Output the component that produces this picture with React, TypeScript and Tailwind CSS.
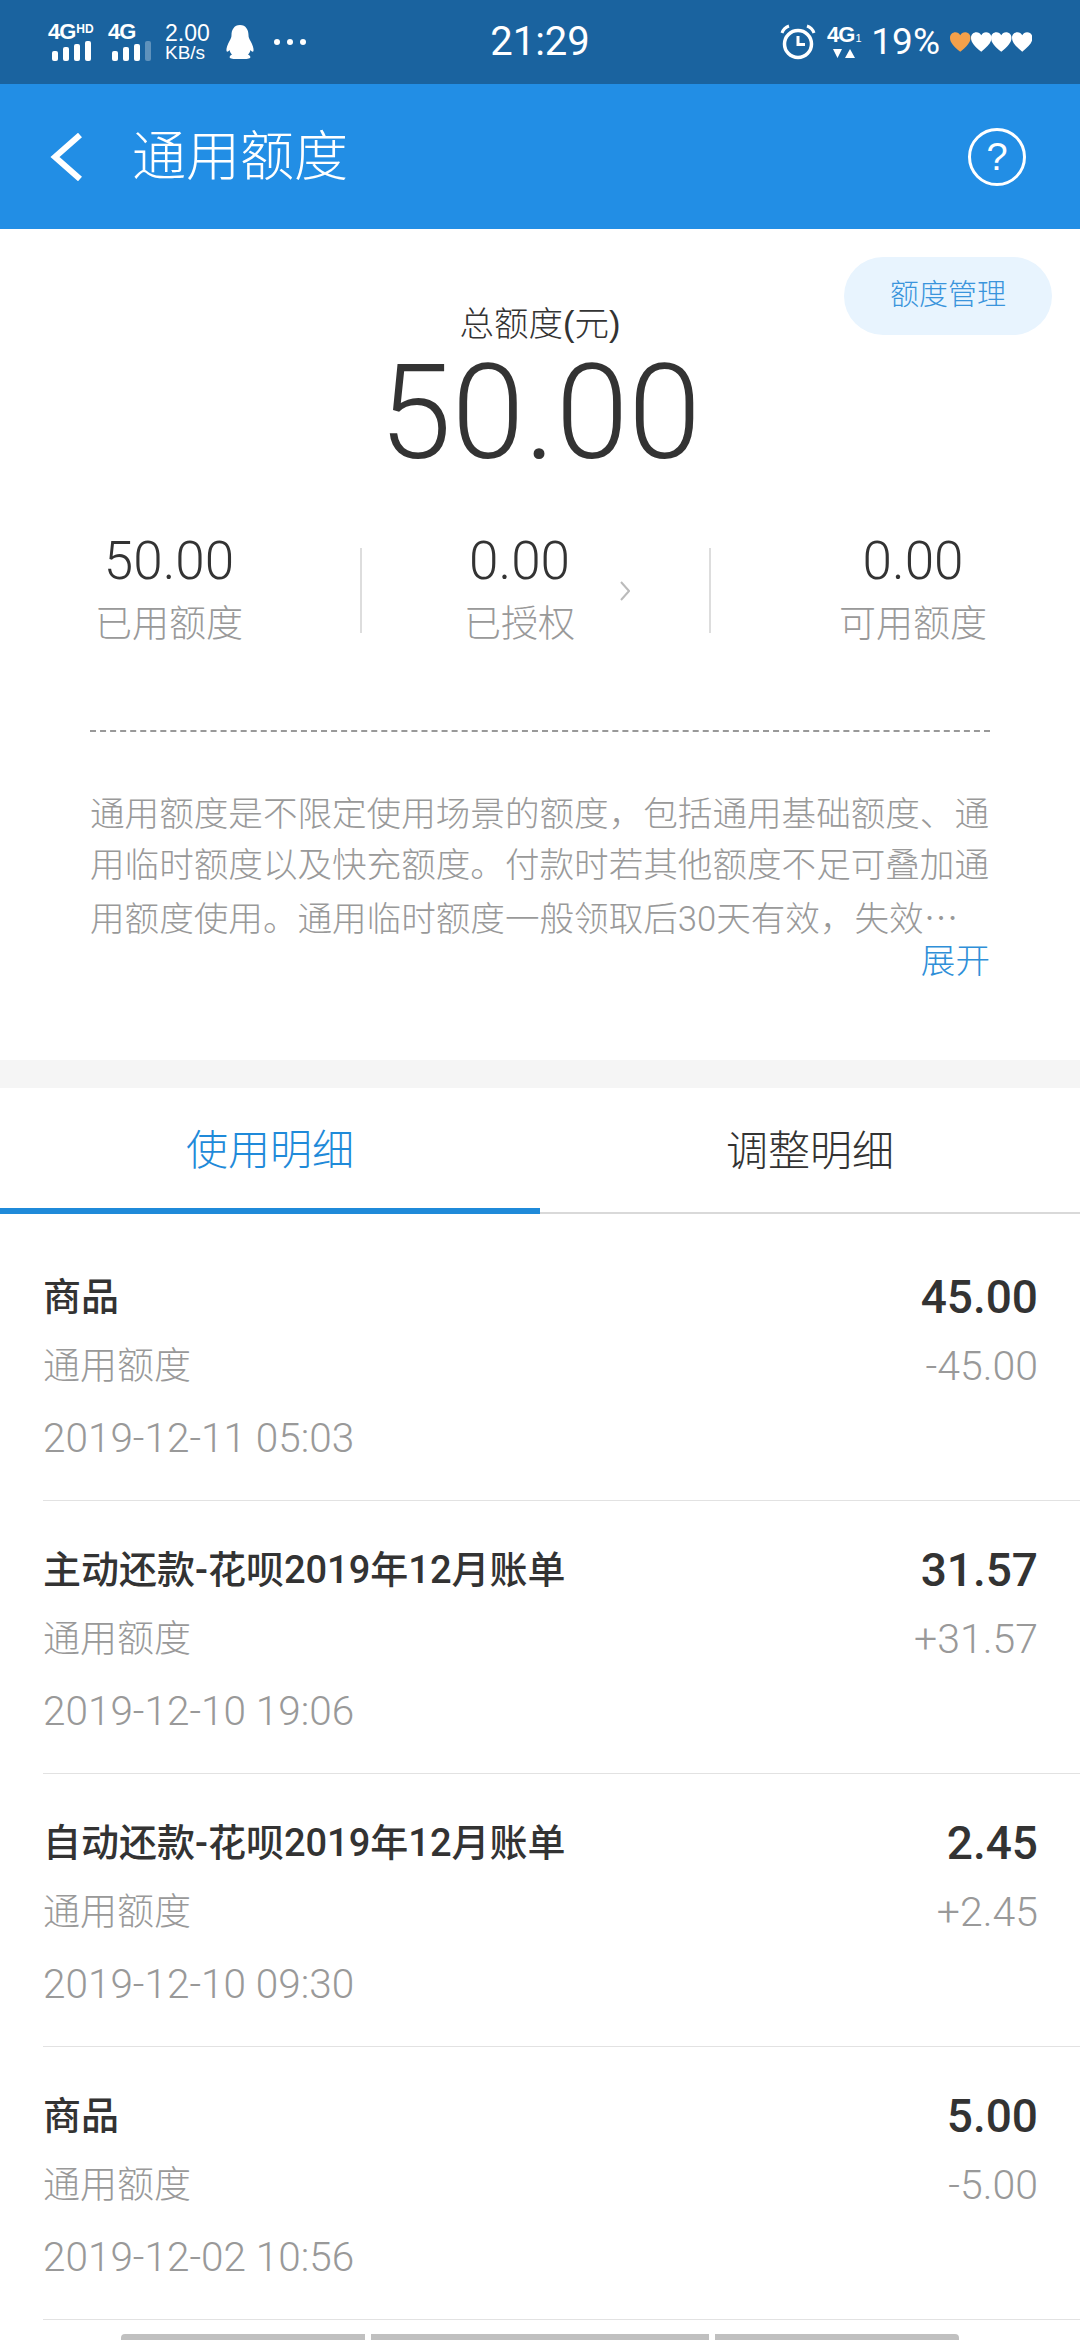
const rows = [
  { title: "商品", amount: "45.00", change: "-45.00", date: "2019-12-11 05:03" },
  { title: "主动还款-花呗2019年12月账单", amount: "31.57", change: "+31.57", date: "2019-12-10 19:06" },
  { title: "自动还款-花呗2019年12月账单", amount: "2.45", change: "+2.45", date: "2019-12-10 09:30" },
  { title: "商品", amount: "5.00", change: "-5.00", date: "2019-12-02 10:56" },
];

const font = "font-['Liberation_Sans','Noto_Sans_CJK_SC',sans-serif]";
const numFont = "font-['Roboto','Noto_Sans_CJK_SC',sans-serif]";

const SignalBars = ({ dim }: { dim?: boolean }) => (
  <div className="flex items-end gap-[5px] h-[20px] ml-[4px]">
    <div className="w-[6px] h-[10px] bg-white rounded-[2px]" />
    <div className="w-[6px] h-[14px] bg-white rounded-[2px]" />
    <div className="w-[6px] h-[17px] bg-white rounded-[2px]" />
    {dim ? (
      <div className="w-[6px] h-[20px] rounded-[2px] bg-white/30" />
    ) : (
      <div className="w-[6px] h-[20px] rounded-[2px] bg-white" />
    )}
  </div>
);

const StatusBar = () => (
  <div className="grid grid-cols-3 items-center h-[84px] bg-[#1a639f] text-white">
    <div className="flex items-center pl-[48px]">
      <div className="flex flex-col w-[51px]">
        <div className="flex items-start h-[18px] font-bold text-[22px] leading-[18px] tracking-[-1px]">
          4G<span className="ml-[1px] text-[12px] leading-[12px] tracking-normal">HD</span>
        </div>
        <SignalBars />
      </div>
      <div className="flex flex-col ml-[9px] w-[50px]">
        <div className="h-[18px] font-bold text-[22px] leading-[18px] tracking-[-1px]">4G</div>
        <SignalBars dim />
      </div>
      <div className="flex flex-col items-start ml-[7px] w-[48px]">
        <span className="text-[23px] leading-[21px]">2.00</span>
        <span className="text-[19px] leading-[17px]">KB/s</span>
      </div>
      <svg className="ml-[13px]" width="28" height="34" viewBox="0 0 28 34" fill="#fff">
        <path d="M14 0c6 0 8.500 5 8.500 10 0 2 .5 3.500 2 6 2 3.500 3.500 7.500 3 10-.5 1.500-2 .5-3-1-.5 2-1.500 3.500-2.500 4.500 2 1 3 2.500 2 3.500-1 1-5 1-10 1s-9 0-10-1c-1-1 0-2.500 2-3.500-1-1-2-2.500-2.500-4.500-1 1.500-2.500 2.500-3 1-.5-2.500 1-6.500 3-10 1.500-2.500 2-4 2-6C5.500 5 8 0 14 0z" />
      </svg>
      <div className="flex gap-[7px] ml-[20px]">
        <div className="w-[6px] h-[6px] rounded-full bg-white" />
        <div className="w-[6px] h-[6px] rounded-full bg-white" />
        <div className="w-[6px] h-[6px] rounded-full bg-white" />
      </div>
    </div>
    <div className={`text-center text-[40px] leading-[44px] ${numFont}`}>21:29</div>
    <div className="flex items-center justify-end pr-[48px]">
      <svg width="36" height="36" viewBox="0 0 36 36" fill="none" stroke="#fff">
        <circle cx="18" cy="20" r="13.500" strokeWidth="3.500" />
        <path d="M18 12v8.500h7" strokeWidth="3" />
        <path d="M2 9c1-3 4-6 7-7M34 9c-1-3-4-6-7-7" strokeWidth="3" />
      </svg>
      <div className="flex flex-col items-center ml-[10px] w-[35px]">
        <div className="font-bold text-[22px] leading-[20px] tracking-[-1px]">
          4G<span className="ml-[1px] text-[11px] font-normal">1</span>
        </div>
        <svg width="22" height="11" viewBox="0 0 22 11" fill="#fff">
          <path d="M0 1h9L4.500 10zM12 10h10L17 1z" />
        </svg>
      </div>
      <span className={`ml-[10px] text-[37px] leading-[40px] ${numFont}`}>19%</span>
      <div className="flex ml-[10px]">
        {["#f4a04a", "#fff", "#fff", "#fff"].map((c, i) => (
          <svg key={i} width="20.500" height="20" viewBox="0 0 20 19" fill={c}>
            <path d="M10 19C4 14 0 10 0 5.500 0 2 2.500 0 5.300 0 7.300 0 9 1 10 3c1-2 2.700-3 4.700-3C17.500 0 20 2 20 5.500 20 10 16 14 10 19z" />
          </svg>
        ))}
      </div>
    </div>
  </div>
);

const Header = () => (
  <div className="flex items-center h-[145px] bg-[#228ee5] text-white">
    <svg className="ml-[50px]" width="33" height="48" viewBox="0 0 33 48" fill="none" stroke="#fff" strokeWidth="6">
      <path d="M30 2 5 24l25 22" />
    </svg>
    <div className="ml-[49px] text-[54px] leading-[70px] font-light">通用额度</div>
    <div className="ml-auto mr-[54px] flex items-center justify-center w-[58px] h-[58px] rounded-full border-[3px] border-white text-[38px] leading-none">
      ?
    </div>
  </div>
);

const Stat = ({ value, label }: { value: string; label: string }) => (
  <div className="flex flex-col items-center">
    <div className={`text-[53px] leading-[60px] text-[#333] font-light ${numFont}`}>{value}</div>
    <div className="mt-[9px] text-[37px] leading-[50px] text-[#999] whitespace-nowrap font-light">{label}</div>
  </div>
);

const Summary = () => (
  <div className="bg-white">
    <div className="grid grid-cols-[1fr_auto_1fr] pt-[28px]">
      <div />
      <div className="mt-[45px] text-[34.500px] leading-[44px] text-[#333] font-light">总额度(元)</div>
      <div className="justify-self-end mr-[28px] flex items-center justify-center w-[208px] h-[78px] rounded-full bg-[#e8f4fe] text-[29px] text-[#3a94dc] font-light">
        额度管理
      </div>
    </div>
    <div className={`mt-[5px] text-center text-[131px] leading-[124px] text-[#333] font-light ${numFont}`}>50.00</div>

    <div className="flex items-start mt-[56px] pl-[95px]">
      <Stat value="50.00" label="已用额度" />
      <div className="w-[2px] h-[85px] mt-[17px] ml-[117px] bg-[#ddd]" />
      <div className="ml-[102px]">
        <Stat value="0.00" label="已授权" />
      </div>
      <svg className="ml-[45px] mt-[50px]" width="10" height="20" viewBox="0 0 10 20" fill="none" stroke="#bbb" strokeWidth="2">
        <path d="m1 1 8 9-8 9" />
      </svg>
      <div className="w-[2px] h-[85px] mt-[17px] ml-[79px] bg-[#ddd]" />
      <div className="ml-[128px]">
        <Stat value="0.00" label="可用额度" />
      </div>
    </div>

    <div className="mt-[80px] mx-[90px] border-t-2 border-dashed border-[#999]" />

    <div className="mt-[57px] mx-[90px] text-[34.600px] leading-[51px] text-[#999] whitespace-nowrap font-light">
      <div>通用额度是不限定使用场景的额度，包括通用基础额度、通</div>
      <div>用临时额度以及快充额度。付款时若其他额度不足可叠加通</div>
      <div>
        用额度使用。通用临时额度一般领取后<span className={numFont}>30</span>天有效，失效
        <span className="font-['Noto_Sans_CJK_SC']">…</span>
      </div>
    </div>
    <div className="mt-[-4px] mx-[90px] text-right text-[34.600px] leading-[40px] text-[#2f8fd8] font-light">展开</div>
    <div className="h-[79px]" />
  </div>
);

const Tabs = () => (
  <div className="flex h-[126px] bg-white">
    <div className="flex-1 flex items-center justify-center pt-[4px] border-b-[6px] border-[#1f8ad9] text-[42px] text-[#1f8ad9] font-light">
      使用明细
    </div>
    <div className="flex-1 flex items-center justify-center pt-[2px] border-b-2 border-[#d9d9d9] text-[42px] text-[#333] font-light">
      调整明细
    </div>
  </div>
);

export default function App() {
  return (
    <div className={`w-[1080px] h-[2340px] overflow-hidden bg-white ${font}`}>
      <StatusBar />
      <Header />
      <Summary />
      <div className="h-[28px] bg-[#f5f5f5]" />
      <Tabs />
      <div className="pt-[14px] pl-[43px]">
        {rows.map((row, i) => (
          <div key={i} className="pt-[44px] pb-[37px] pr-[42px] border-b border-[#e2e2e2]">
            <div className={`flex justify-between items-center h-[50px] font-medium text-[#333] ${numFont}`}>
              <span className="text-[38px]">{row.title}</span>
              <span className="text-[46px]">{row.amount}</span>
            </div>
            <div className="flex justify-between items-center h-[50px] mt-[20px] text-[#999] font-light">
              <span className="text-[37px]">通用额度</span>
              <span className={`text-[41px] ${numFont}`}>{row.change}</span>
            </div>
            <div className={`h-[50px] mt-[21px] text-[40.500px] leading-[50px] text-[#999] font-light ${numFont}`}>{row.date}</div>
          </div>
        ))}
      </div>
      <div className="flex gap-[6px] mt-[14px] ml-[121px]">
        <div className="w-[244px] h-[8px] bg-[#c0c0c0] rounded-tl-[4px]" />
        <div className="w-[338px] h-[8px] bg-[#c0c0c0]" />
        <div className="w-[244px] h-[8px] bg-[#c0c0c0] rounded-tr-[4px]" />
      </div>
    </div>
  );
}
